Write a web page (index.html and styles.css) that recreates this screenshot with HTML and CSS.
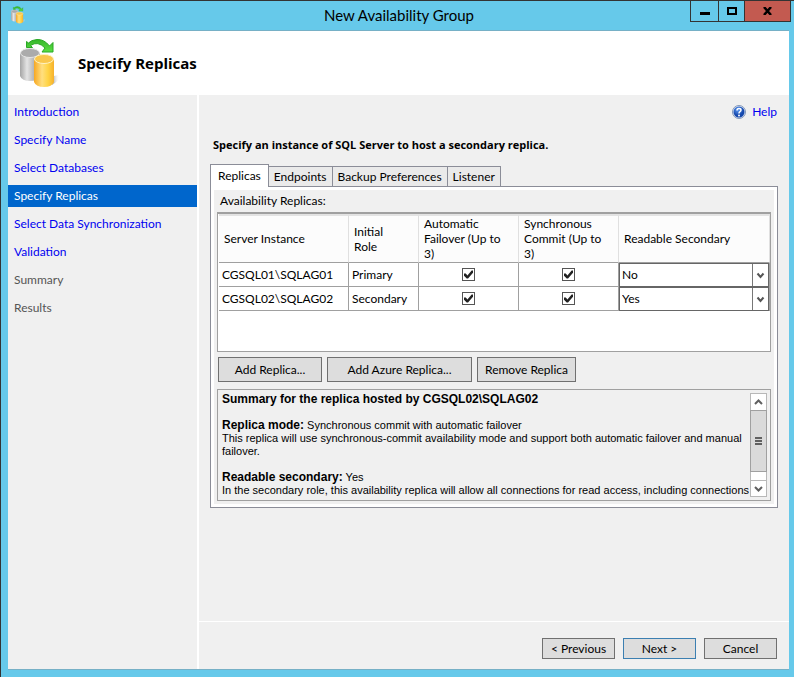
FILE: index.html
```html
<!DOCTYPE html>
<html lang="en">
<head>
  <meta charset="UTF-8">
  <meta name="viewport" content="width=device-width, initial-scale=1.0">
  <title>New Availability Group</title>
  <link rel="stylesheet" href="styles.css">
</head>
<body>

<!-- Shared shapes -->
<svg class="defs" width="0" height="0" aria-hidden="true">
  <defs>
    <linearGradient id="silver">
      <stop offset="0" stop-color="#a4a4a4"/>
      <stop offset="0.35" stop-color="#e4e4e4"/>
      <stop offset="1" stop-color="#8c8c8c"/>
    </linearGradient>
    <linearGradient id="gold">
      <stop offset="0" stop-color="#f7a823"/>
      <stop offset="0.4" stop-color="#ffdf80"/>
      <stop offset="0.7" stop-color="#ffd445"/>
      <stop offset="1" stop-color="#f6b02c"/>
    </linearGradient>
    <linearGradient id="green" x2="0" y2="1">
      <stop offset="0" stop-color="#35b52a"/>
      <stop offset="1" stop-color="#5be043"/>
    </linearGradient>
    <linearGradient id="shade">
      <stop offset="0" stop-color="#999"/>
      <stop offset="1" stop-color="#fff" stop-opacity="0"/>
    </linearGradient>
    <radialGradient id="blue" cx="0.4" cy="0.3">
      <stop offset="0" stop-color="#5b9af5"/>
      <stop offset="1" stop-color="#1648ac"/>
    </radialGradient>
    <symbol id="replicas" viewBox="0 0 42 50">
      <path d="M32 47 L34 38 L38 37 Q43 40 32 47z" fill="url(#shade)"/>
      <path d="M0 15 V38 Q2 43 10 43 Q18 43 20 38 V15z" fill="url(#silver)"/>
      <ellipse cx="10" cy="15" rx="9.500" ry="4.500" fill="#ababab" stroke="#e6e6e6"/>
      <path d="M14 21 V44 Q16 49 24 49 Q32 49 34 44 V21z" fill="url(#gold)"/>
      <ellipse cx="24" cy="21" rx="9.500" ry="4.500" fill="#f9c74c" stroke="#fff3c4"/>
      <path d="M6.500 3.500 V9.500 H12.500 L10.500 7.500 Q18 2.500 25 10 L22 14 H33 V4.500 L29.500 8 Q24 1 17 1.500 Q11 2 8.500 5z" fill="url(#green)" stroke="#2aa825" stroke-width="1"/>
    </symbol>
  </defs>
</svg>

<div class="window">
  <header class="titlebar">
    <svg class="app-icon" viewBox="0 0 42 50" aria-hidden="true"><use href="#replicas"/></svg>
    <span class="title">New Availability Group</span>
    <div class="window-buttons">
      <button type="button" class="minimize" aria-label="Minimize">
        <svg width="10" height="9"><path d="M0 5h10v3H0z"/></svg>
      </button>
      <button type="button" class="maximize" aria-label="Maximize">
        <svg width="10" height="8"><path d="M1 1h8v6H1z" fill="none" stroke="#000" stroke-width="2"/></svg>
      </button>
      <button type="button" class="close" aria-label="Close">
        <svg width="9" height="8"><path d="M1 0L8 8M8 0L1 8" fill="none" stroke="#000" stroke-width="2.500"/></svg>
      </button>
    </div>
  </header>

  <div class="client">
    <div class="banner">
      <svg class="banner-icon" viewBox="0 0 42 50" aria-hidden="true"><use href="#replicas"/></svg>
      <h1>Specify Replicas</h1>
    </div>

    <div class="wizard">
      <nav class="steps">
        <a href="#">Introduction</a>
        <a href="#">Specify Name</a>
        <a href="#">Select Databases</a>
        <a href="#" class="current">Specify Replicas</a>
        <a href="#">Select Data Synchronization</a>
        <a href="#">Validation</a>
        <span>Summary</span>
        <span>Results</span>
      </nav>

      <div class="page">
        <main>
          <div class="help">
            <svg width="14" height="14" viewBox="0 0 14 14" aria-hidden="true">
              <circle cx="7" cy="7" r="6.500" fill="#dce6f5" stroke="#8095b8"/>
              <circle cx="7" cy="7" r="5.500" fill="url(#blue)"/>
              <path d="M5 5.500Q5 3.500 7 3.500Q9 3.500 9 5Q9 6 8 6.600Q7 7.200 7 8.500" fill="none" stroke="#fff" stroke-width="1.500"/>
              <circle cx="7" cy="10.500" r="1" fill="#fff"/>
            </svg>
            <a href="#">Help</a>
          </div>
          <h2>Specify an instance of SQL Server to host a secondary replica.</h2>

          <div class="tabs" role="tablist">
            <button type="button" role="tab" class="tab active" aria-selected="true">Replicas</button>
            <button type="button" role="tab" class="tab">Endpoints</button>
            <button type="button" role="tab" class="tab">Backup Preferences</button>
            <button type="button" role="tab" class="tab">Listener</button>
          </div>

          <div class="panel">
            <div class="panel-label" id="gridLabel">Availability Replicas:</div>
            <div class="grid">
              <table aria-labelledby="gridLabel">
                <colgroup>
                  <col class="col-server">
                  <col class="col-role">
                  <col class="col-check">
                  <col class="col-check">
                  <col>
                </colgroup>
                <thead>
                  <tr>
                    <th>Server Instance</th>
                    <th>Initial<br>Role</th>
                    <th>Automatic<br>Failover (Up to<br>3)</th>
                    <th>Synchronous<br>Commit (Up to<br>3)</th>
                    <th>Readable Secondary</th>
                  </tr>
                </thead>
                <tbody>
                  <tr>
                    <td>CGSQL01\SQLAG01</td>
                    <td>Primary</td>
                    <td class="check"><input type="checkbox" aria-label="Automatic failover, CGSQL01" checked></td>
                    <td class="check"><input type="checkbox" aria-label="Synchronous commit, CGSQL01" checked></td>
                    <td class="combo">
                      <div class="select">
                        <select aria-label="Readable secondary, CGSQL01">
                          <option selected>No</option>
                          <option>Yes</option>
                        </select>
                        <svg width="16" height="22" aria-hidden="true"><path d="M4.500 9.500l3 3.500 3-3.500" /></svg>
                      </div>
                    </td>
                  </tr>
                  <tr>
                    <td>CGSQL02\SQLAG02</td>
                    <td>Secondary</td>
                    <td class="check"><input type="checkbox" aria-label="Automatic failover, CGSQL02" checked></td>
                    <td class="check"><input type="checkbox" aria-label="Synchronous commit, CGSQL02" checked></td>
                    <td class="combo">
                      <div class="select">
                        <select aria-label="Readable secondary, CGSQL02">
                          <option>No</option>
                          <option selected>Yes</option>
                        </select>
                        <svg width="16" height="22" aria-hidden="true"><path d="M4.500 9.500l3 3.500 3-3.500" /></svg>
                      </div>
                    </td>
                  </tr>
                </tbody>
              </table>
            </div>

            <div class="actions">
              <button type="button" class="add">Add Replica...</button>
              <button type="button" class="add-azure">Add Azure Replica...</button>
              <button type="button" class="remove">Remove Replica</button>
            </div>

            <div class="summary">
              <div class="summary-text">
                <p><b>Summary for the replica hosted by CGSQL02\SQLAG02</b></p>
                <p><b>Replica mode:</b> Synchronous commit with automatic failover<br>
                This replica will use synchronous-commit availability mode and support both automatic failover and manual failover.</p>
                <p><b>Readable secondary:</b> Yes<br>
                In the secondary role, this availability replica will allow all connections for read access, including connections</p>
              </div>
              <div class="scrollbar">
                <button type="button" aria-label="Scroll up">
                  <svg width="9" height="6"><path d="M1 5l3.500-3.500L8 5"/></svg>
                </button>
                <div class="track">
                  <div class="thumb"><i></i><i></i><i></i></div>
                </div>
                <button type="button" aria-label="Scroll down">
                  <svg width="9" height="6"><path d="M1 1l3.500 3.500L8 1"/></svg>
                </button>
              </div>
            </div>
          </div>
        </main>

        <footer>
          <button type="button">&lt; Previous</button>
          <button type="button" class="default">Next &gt;</button>
          <button type="button">Cancel</button>
        </footer>
      </div>
    </div>
  </div>
</div>

</body>
</html>
```
FILE: styles.css
```css
* {
  box-sizing: border-box;
}

body {
  margin: 0;
  font-family: Lato, "Open Sans", sans-serif;
  font-size: 12px;
  line-height: 15px;
  color: #000;
}

button,
select {
  font: inherit;
  color: inherit;
  padding: 0;
  margin: 0;
  border-radius: 0;
}

a {
  color: #0000f0;
  text-decoration: none;
}

.defs {
  position: absolute;
}

/* Window frame */
.window {
  display: flex;
  flex-direction: column;
  min-height: 100vh;
  padding: 0 5px 7px 7px;
  background-color: #66c9ea;
  border-top: 1px solid #333;
  border-left: 1px solid #333;
}

.titlebar {
  display: flex;
  height: 30px;
  border-bottom: 1px solid #76b0c6;
}

.app-icon {
  width: 15px;
  height: 18px;
  margin: 5px 0 0 3px;
}

.title {
  flex: 1;
  padding-left: 82px;
  font-size: 15px;
  line-height: 29px;
  text-align: center;
}

.window-buttons {
  display: flex;
  height: 21px;
  margin-right: -2px;
}

.window-buttons button {
  display: flex;
  align-items: center;
  justify-content: center;
  width: 29px;
  background-color: #66c9ea;
  border: 1px solid #333;
  border-top: none;
}

.window-buttons .maximize {
  width: 26px;
  border-left: none;
}

.window-buttons .close {
  width: 46px;
  background-color: #c35a50;
  border-left: none;
}

.client {
  flex: 1;
  display: flex;
  flex-direction: column;
  background-color: #f0f0f0;
  border-bottom: 1px solid #76b0c6;
}

.banner {
  display: flex;
  align-items: center;
  gap: 16px;
  height: 64px;
  padding-left: 12px;
  background-color: #fff;
}

.banner-icon {
  width: 42px;
  height: 50px;
}

h1,
h2 {
  font-family: "Open Sans", "Noto Sans", sans-serif;
}

h1 {
  margin: 0;
  font-size: 15px;
  line-height: 20px;
}

.wizard {
  flex: 1;
  display: flex;
}

/* Step list */
.steps {
  display: flex;
  flex-direction: column;
  gap: 6px;
  width: 191px;
  padding-top: 6px;
  border-right: 2px solid #fff;
}

.steps a,
.steps span {
  padding-left: 6px;
  line-height: 22px;
}

.steps span {
  color: #555;
}

.steps .current {
  color: #fff;
  background-color: #0066cc;
}

.page {
  flex: 1;
  display: flex;
  flex-direction: column;
  min-width: 0;
}

main {
  flex: 1;
  padding: 9px 11px 0;
}

.help {
  display: flex;
  align-items: center;
  justify-content: flex-end;
  gap: 6px;
  height: 15px;
  margin-right: 1px;
}

h2 {
  margin: 18px 3px 11px;
  font-size: 11px;
  line-height: 16px;
}

/* Tabs */
.tabs {
  display: flex;
  align-items: flex-end;
  height: 22px;
}

.tab {
  height: 20px;
  padding: 0 5px;
  background-color: #eaeaea;
  border: 1px solid #8b8d98;
  border-left: none;
  border-bottom: none;
  white-space: nowrap;
}

.tab.active {
  position: relative;
  height: 23px;
  margin-bottom: -1px;
  padding: 0 7px 2px;
  background-color: #fff;
  border-left: 1px solid #8b8d98;
}

.panel {
  padding: 5px 4px 6px;
  background-color: #f0f0f0;
  border: 1px solid #8b8d98;
  box-shadow: inset 0 0 0 3px #fff;
}

.panel-label {
  padding: 1px 5px 4px;
}

/* Replica grid */
.grid {
  height: 140px;
  margin: 0 2px;
  padding-left: 1px;
  background-color: #fff;
  border: 1px solid #a0a0a0;
  border-top-width: 2px;
}

table {
  width: 100%;
  border-collapse: separate;
  border-spacing: 0;
  table-layout: fixed;
}

.col-server {
  width: 130px;
}

.col-role {
  width: 70px;
}

.col-check {
  width: 100px;
}

th {
  height: 49px;
  padding: 0 5px 1px;
  font-weight: normal;
  text-align: left;
  background-color: #fcfcfc;
  border-top: 2px solid #e3e3e3;
  border-right: 1px solid #e0e0e0;
  border-bottom: 1px solid #a0a0a0;
}

td {
  height: 24px;
  padding: 0 3px;
  border-right: 1px solid #a0a0a0;
  border-bottom: 1px solid #a0a0a0;
  white-space: nowrap;
}

td.check {
  padding: 0;
  text-align: center;
}

td.combo {
  padding: 0;
  border-bottom: none;
}

input[type="checkbox"] {
  appearance: none;
  display: block;
  width: 13px;
  height: 13px;
  margin: 0 auto;
  border: 1px solid #555;
  background-color: #fff;
}

input[type="checkbox"]:checked::before {
  content: "";
  display: block;
  width: 9px;
  height: 9px;
  margin: 1px;
  background-color: #222;
  clip-path: polygon(0 40%, 20% 40%, 38% 62%, 85% 5%, 100% 5%, 100% 30%, 45% 95%, 30% 95%, 0 65%);
}

.select {
  position: relative;
}

.select select {
  appearance: none;
  display: block;
  width: 100%;
  height: 24px;
  padding: 0 20px 2px 2px;
  background-color: #fff;
  border: 1px solid #666;
}

.select svg {
  position: absolute;
  top: 1px;
  right: 1px;
  border-left: 1px solid #777;
  fill: none;
  stroke: #555;
  stroke-width: 2;
  pointer-events: none;
}

.actions {
  display: flex;
  gap: 5px;
  padding: 5px 3px 7px;
}

.actions button,
footer button {
  background-color: #dddddd;
  border: 1px solid #707070;
}

.actions button {
  height: 25px;
}

.actions .add {
  width: 104px;
}

.actions .add-azure {
  width: 145px;
}

.actions .remove {
  width: 99px;
}

/* Replica summary */
.summary {
  display: flex;
  height: 112px;
  margin: 0 2px;
  padding: 3px;
  border: 1px solid #a0a0a0;
}

.summary-text {
  flex: 1;
  overflow: hidden;
  font-family: "Liberation Sans", Arial, sans-serif;
  font-size: 11px;
  line-height: 13px;
}

.summary-text p {
  margin: 0 0 13px 1px;
}

.summary-text b {
  font-size: 12px;
}

.scrollbar {
  display: flex;
  flex-direction: column;
  width: 17px;
  background-color: #fff;
  border: 1px solid #b8b8b8;
}

.scrollbar button {
  display: flex;
  align-items: center;
  justify-content: center;
  height: 16px;
  background-color: #fff;
  border: none;
}

.scrollbar button:last-child {
  border-top: 1px solid #b8b8b8;
}

.scrollbar svg {
  fill: none;
  stroke: #606060;
  stroke-width: 2;
}

.track {
  flex: 1;
}

.thumb {
  display: flex;
  flex-direction: column;
  align-items: center;
  justify-content: center;
  gap: 1px;
  height: 62px;
  margin: 0 -1px;
  background-color: #dadada;
  border: 1px solid #a0a0a0;
}

.thumb i {
  width: 7px;
  height: 2px;
  background-color: #606060;
}

footer {
  display: flex;
  justify-content: flex-end;
  gap: 8px;
  padding: 16px 12px 10px;
  border-top: 1px solid #fff;
}

footer button {
  width: 73px;
  height: 21px;
}

footer .default {
  border-color: #3c7fb1;
}
```
